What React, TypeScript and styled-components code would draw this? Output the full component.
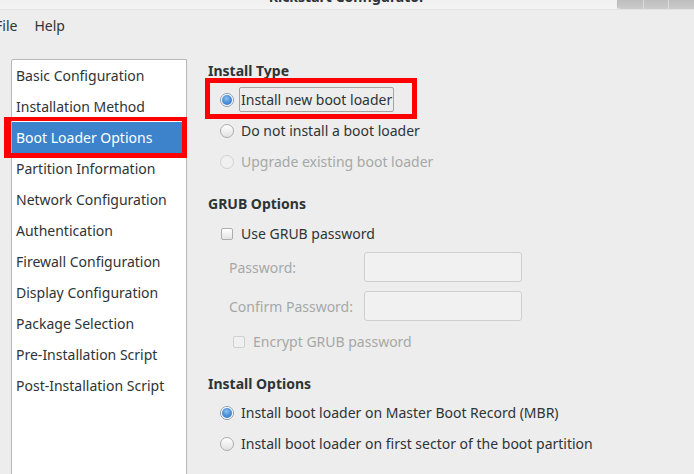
import React from 'react';
import styled, { createGlobalStyle } from 'styled-components';

const GlobalStyle = createGlobalStyle`
    html, body {
        margin: 0;
        padding: 0;
        background: #ededed;
    }
    body {
        font-family: "Noto Sans", "DejaVu Sans", sans-serif;
        font-size: 14px;
        color: #2e3436;
    }
`;

const Window = styled.div`
    width: 694px;
    height: 474px;
    overflow: hidden;
    background: #ededed;
    display: flex;
    flex-direction: column;
`;

const TitleBar = styled.div`
    position: relative;
    height: 10px;
    flex: none;
    overflow: hidden;
    background: linear-gradient(#f0f0f0, #f4f4f4);
    border-bottom: 1px solid #e2e2e2;
    box-sizing: border-box;
`;

const TitleText = styled.div`
    text-align: center;
    font-weight: bold;
    font-size: 14px;
    line-height: 16px;
    margin-top: -11px;
`;

// min / max / close buttons, mostly scrolled off the top of the screen
const WindowButtons = styled.div`
    position: absolute;
    top: 0;
    right: 0;
    width: 76px;
    height: 9px;
    display: flex;
    border-bottom-left-radius: 4px;
    overflow: hidden;
    border-left: 1px solid #b8b8b8;
    border-bottom: 1px solid #fafafa;
`;

const WindowButton = styled.div`
    flex: 1;
    background: linear-gradient(#bebebe, #cbcbcb);
    & + & {
        border-left: 1px solid #dcdcdc;
    }
`;

const MenuBar = styled.div`
    height: 32px;
    flex: none;
    display: flex;
    align-items: center;
    gap: 17px;
    margin-left: -5px;
`;

const MenuItem = styled.span`
    padding-bottom: 1px;
`;

const Body = styled.div`
    flex: 1;
    display: flex;
    padding: 17px 0 0 11px;
    gap: 21px;
`;

const Sidebar = styled.ul`
    list-style: none;
    margin: 0;
    padding: 0;
    width: 176px;
    height: 440px;
    box-sizing: border-box;
    background: #fff;
    border: 1px solid #b9b9b9;
    border-top-left-radius: 2px;
    flex: none;
`;

const SidebarItem = styled.li<{ $active?: boolean }>`
    position: relative;
    height: 31px;
    line-height: 31px;
    padding-left: 4px;
    white-space: nowrap;
    background: ${p => (p.$active ? '#3c83cc' : 'transparent')};
    color: ${p => (p.$active ? '#ffffff' : '#2e3436')};
`;

// red callout drawn over the highlighted parts
const Callout = styled.div<{ $top: number; $left: number; $width: number; $height: number; $border: string }>`
    position: absolute;
    top: ${p => p.$top}px;
    left: ${p => p.$left}px;
    width: ${p => p.$width}px;
    height: ${p => p.$height}px;
    box-sizing: border-box;
    border: solid #ff0000;
    border-width: ${p => p.$border};
    pointer-events: none;
`;

const Content = styled.div`
    display: flex;
    flex-direction: column;
    padding-top: 2px;
`;

const Section = styled.section`
    display: flex;
    flex-direction: column;
    & + & {
        margin-top: 17px;
    }
`;

const SectionTitle = styled.div<{ $gap?: number }>`
    font-weight: bold;
    line-height: 20px;
    margin-bottom: ${p => p.$gap ?? 3}px;
`;

const OptionRow = styled.div<{ $indent?: number; $gap?: number; $disabled?: boolean }>`
    position: relative;
    height: 31px;
    display: flex;
    align-items: center;
    gap: ${p => p.$gap ?? 5}px;
    padding-left: ${p => p.$indent ?? 12}px;
    color: ${p => (p.$disabled ? '#a6a8a8' : '#2e3436')};
    white-space: nowrap;
`;

const Label = styled.span<{ $focused?: boolean }>`
    line-height: 23px;
    padding: 0 1px;
    border: 1px solid ${p => (p.$focused ? '#a3a3a3' : 'transparent')};
    border-radius: 2px;
`;

const Radio = styled.span<{ $checked?: boolean; $disabled?: boolean }>`
    position: relative;
    width: 14px;
    height: 14px;
    box-sizing: border-box;
    border-radius: 50%;
    flex: none;
    border: 1px solid ${p => (p.$disabled ? '#d2d2d2' : p.$checked ? '#8b9bb0' : '#ababab')};
    background: ${p => (p.$disabled ? '#f0f0f0' : 'linear-gradient(#ffffff, #e2e2e2)')};

    &::after {
        content: '';
        display: ${p => (p.$checked ? 'block' : 'none')};
        position: absolute;
        inset: 1px;
        border-radius: 50%;
        background: radial-gradient(circle at 45% 35%, #8fc0f2 0, #4f93dc 45%, #2f6fc0 100%);
        box-shadow: 0 0 0 1px #eef3f9;
    }
`;

const Checkbox = styled.span<{ $disabled?: boolean }>`
    width: 12px;
    height: 12px;
    box-sizing: border-box;
    border-radius: 2px;
    flex: none;
    border: 1px solid ${p => (p.$disabled ? '#d0d0d0' : '#adadad')};
    background: ${p => (p.$disabled ? '#f0f0f0' : 'linear-gradient(#ffffff, #e4e4e4)')};
`;

const FieldGrid = styled.div`
    display: grid;
    grid-template-columns: 135px 158px;
    grid-auto-rows: 30px;
    row-gap: 9px;
    align-items: center;
    padding-left: 21px;
    margin-top: 3px;
    color: #a6a8a8;
`;

const Entry = styled.div`
    height: 30px;
    box-sizing: border-box;
    border: 1px solid #cfcfcf;
    border-radius: 3px;
    background: #f1f1f1;
`;

const EncryptRow = styled(OptionRow)`
    margin-top: 5px;
`;

const sidebarItems = [
    'Basic Configuration',
    'Installation Method',
    'Boot Loader Options',
    'Partition Information',
    'Network Configuration',
    'Authentication',
    'Firewall Configuration',
    'Display Configuration',
    'Package Selection',
    'Pre-Installation Script',
    'Post-Installation Script',
];

const App: React.FC = () => {
    return (
        <>
            <GlobalStyle />
            <Window>
                <TitleBar>
                    <TitleText>Kickstart Configurator</TitleText>
                    <WindowButtons>
                        <WindowButton />
                        <WindowButton />
                        <WindowButton />
                    </WindowButtons>
                </TitleBar>
                <MenuBar>
                    <MenuItem>File</MenuItem>
                    <MenuItem>Help</MenuItem>
                </MenuBar>
                <Body>
                    <Sidebar>
                        {sidebarItems.map(item => {
                            const active = item === 'Boot Loader Options';
                            return (
                                <SidebarItem key={item} $active={active}>
                                    {item}
                                    {active && (
                                        <Callout $top={-5} $left={-8} $width={183} $height={41} $border="4px 5px 5px 7px" />
                                    )}
                                </SidebarItem>
                            );
                        })}
                    </Sidebar>
                    <Content>
                        <Section>
                            <SectionTitle>Install Type</SectionTitle>
                            <OptionRow>
                                <Radio $checked />
                                <Label $focused>Install new boot loader</Label>
                                <Callout $top={-6} $left={-3} $width={212} $height={41} $border="5px" />
                            </OptionRow>
                            <OptionRow>
                                <Radio />
                                <Label>Do not install a boot loader</Label>
                            </OptionRow>
                            <OptionRow $disabled>
                                <Radio $disabled />
                                <Label>Upgrade existing boot loader</Label>
                            </OptionRow>
                        </Section>
                        <Section>
                            <SectionTitle $gap={4}>GRUB Options</SectionTitle>
                            <OptionRow $indent={13} $gap={6}>
                                <Checkbox />
                                <Label>Use GRUB password</Label>
                            </OptionRow>
                            <FieldGrid>
                                <span>Password:</span>
                                <Entry />
                                <span>Confirm Password:</span>
                                <Entry />
                            </FieldGrid>
                            <EncryptRow $indent={25} $gap={6} $disabled>
                                <Checkbox $disabled />
                                <Label>Encrypt GRUB password</Label>
                            </EncryptRow>
                        </Section>
                        <Section>
                            <SectionTitle>Install Options</SectionTitle>
                            <OptionRow>
                                <Radio $checked />
                                <Label>Install boot loader on Master Boot Record (MBR)</Label>
                            </OptionRow>
                            <OptionRow>
                                <Radio />
                                <Label>Install boot loader on first sector of the boot partition</Label>
                            </OptionRow>
                        </Section>
                    </Content>
                </Body>
            </Window>
        </>
    );
};

export default App;
